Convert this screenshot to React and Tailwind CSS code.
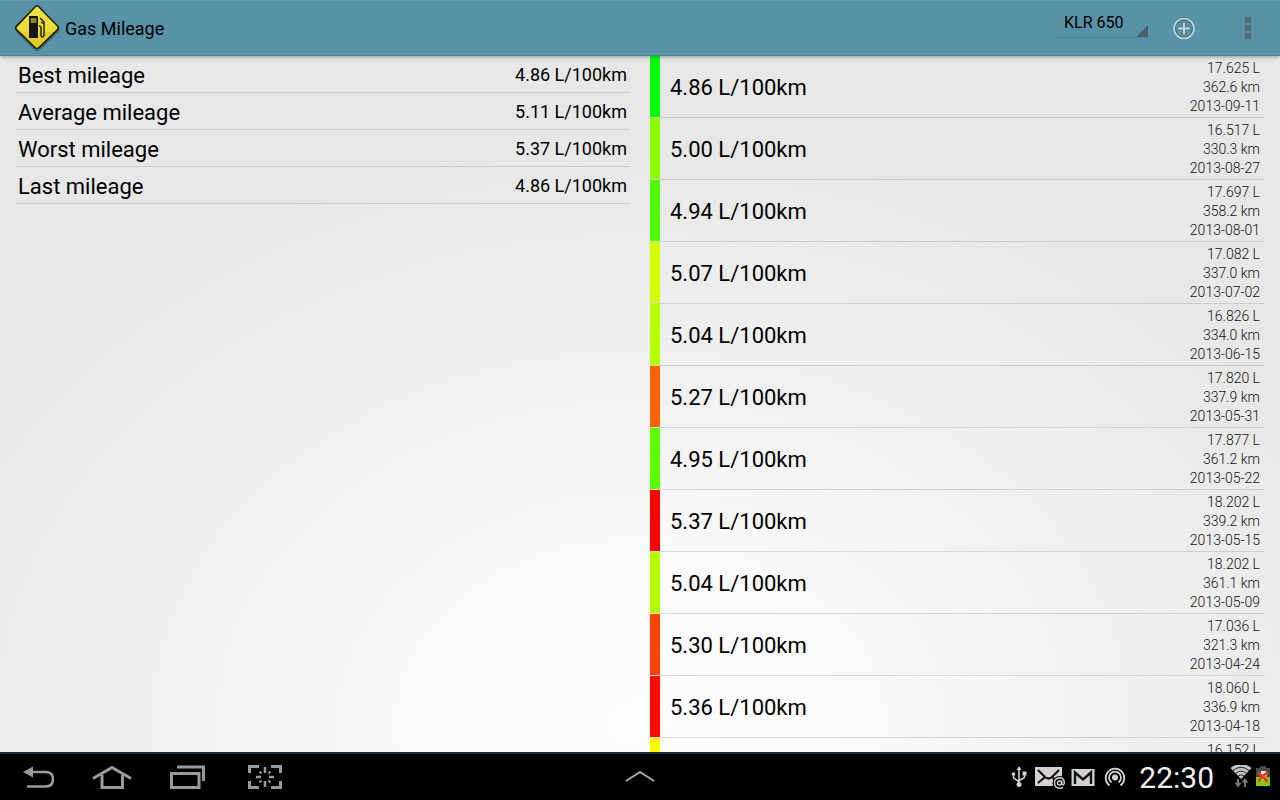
import React, { useState } from "react";

const stats = [
  { label: "Best mileage", value: "4.86 L/100km" },
  { label: "Average mileage", value: "5.11 L/100km" },
  { label: "Worst mileage", value: "5.37 L/100km" },
  { label: "Last mileage", value: "4.86 L/100km" },
];

const fillups = [
  { mileage: "4.86", litres: "17.625", km: "362.6", date: "2013-09-11", color: "bg-[#00ff00]" },
  { mileage: "5.00", litres: "16.517", km: "330.3", date: "2013-08-27", color: "bg-[#8cff00]" },
  { mileage: "4.94", litres: "17.697", km: "358.2", date: "2013-08-01", color: "bg-[#50ff00]" },
  { mileage: "5.07", litres: "17.082", km: "337.0", date: "2013-07-02", color: "bg-[#d2ff00]" },
  { mileage: "5.04", litres: "16.826", km: "334.0", date: "2013-06-15", color: "bg-[#b4ff00]" },
  { mileage: "5.27", litres: "17.820", km: "337.9", date: "2013-05-31", color: "bg-[#ff6200]" },
  { mileage: "4.95", litres: "17.877", km: "361.2", date: "2013-05-22", color: "bg-[#5aff00]" },
  { mileage: "5.37", litres: "18.202", km: "339.2", date: "2013-05-15", color: "bg-[#ff0000]" },
  { mileage: "5.04", litres: "18.202", km: "361.1", date: "2013-05-09", color: "bg-[#b4ff00]" },
  { mileage: "5.30", litres: "17.036", km: "321.3", date: "2013-04-24", color: "bg-[#ff4400]" },
  { mileage: "5.36", litres: "18.060", km: "336.9", date: "2013-04-18", color: "bg-[#ff0800]" },
  { litres: "16.152", color: "bg-[#fffa00]" },
];

function Logo() {
  return (
    <svg className="h-12 w-12" viewBox="0 0 48 48" aria-hidden="true">
      <defs>
        <linearGradient id="sign" x1="0" y1="0" x2="0" y2="1">
          <stop offset="0" stopColor="#f0e150" />
          <stop offset="0.6" stopColor="#ebdb34" />
          <stop offset="0.62" stopColor="#e3cf2a" />
          <stop offset="1" stopColor="#dfc922" />
        </linearGradient>
      </defs>
      <path d="M24 4 L46 26 Q47 27 46 28 L26 47 Q24 48 22 47 L3 28 Z" fill="#000" opacity="0.25" />
      <path d="M22 2 Q24 0 26 2 L45.500 22 Q47 24 45.500 26 L26 44.500 Q24 46 22 44.500 L2.500 26 Q1 24 2.500 22 Z" fill="#1d1b08" />
      <path d="M23 3 Q24 2 25 3 L44 22.500 Q45 24 44 25 L25 43.500 Q24 44 23 43.500 L4 25 Q3 24 4 23 Z" fill="url(#sign)" />
      <path d="M16.500 12 H24 Q25 12 25 13 V34 H16 V13 Q16 12 16.500 12 Z" fill="#151515" />
      <rect x="17.500" y="14" width="6" height="5" fill="#8a8030" />
      <path d="M27 14 L31 18 V30 Q31 33 29.500 33 Q28 33 28 31 V24 Q28 22 26 22 M28 18 L31 20" fill="none" stroke="#28250d" strokeWidth="1.500" />
    </svg>
  );
}

function Header() {
  const [bike, setBike] = useState("KLR 650");

  return (
    <header className="relative z-10 flex h-14 shrink-0 items-center border-b border-[#4f8195] border-t border-t-[#649db2] bg-[#5892a7] pl-[13px] pr-4 shadow-[0_1px_4px_rgba(0,0,0,0.35)]">
      <Logo />
      <h1 className="ml-1 flex-1 pt-[2px] text-lg">Gas Mileage</h1>

      <div className="relative mb-[10px] mr-5 w-[92px] border-b border-[#4c7f92]">
        <select
          aria-label="Vehicle"
          value={bike}
          onChange={(e) => setBike(e.target.value)}
          className="block h-7 w-full appearance-none bg-transparent pl-2 text-base outline-none"
        >
          <option>KLR 650</option>
        </select>
        <svg className="pointer-events-none absolute bottom-0 right-0 h-3 w-3" viewBox="0 0 12 12" aria-hidden="true">
          <path d="M12 0 V12 H0 Z" fill="#49626d" />
        </svg>
      </div>

      <button type="button" aria-label="Add fill-up" className="flex h-8 w-8 items-center justify-center">
        <svg className="h-6 w-6" viewBox="0 0 24 24" fill="none">
          <circle cx="12" cy="12.500" r="9.500" stroke="#4d7788" strokeWidth="3.400" />
          <circle cx="12" cy="12.500" r="10" stroke="#bfd5dd" strokeWidth="1.700" />
          <path d="M12 5.500 V19.500 M5 12.500 H19" stroke="#4d7788" strokeWidth="3.600" />
          <path d="M12 6.500 V18.500 M6 12.500 H18" stroke="#c3d8df" strokeWidth="1.900" />
        </svg>
      </button>

      <button type="button" aria-label="More options" className="ml-8 flex h-8 w-8 flex-col items-center justify-center gap-[2px]">
        <span className="h-[6px] w-[6px] bg-[#4e6b77]" />
        <span className="h-[6px] w-[6px] bg-[#4e6b77]" />
        <span className="h-[6px] w-[6px] bg-[#4e6b77]" />
      </button>
    </header>
  );
}

function StatsPane() {
  return (
    <section className="min-w-0 pl-[15px] pr-[10px]">
      <dl>
        {stats.map((s) => (
          <div key={s.label} className="flex h-[37px] items-center justify-between border-b border-black/12 px-[3px] pt-[2px]">
            <dt className="text-[22px]">{s.label}</dt>
            <dd className="text-lg">{s.value}</dd>
          </div>
        ))}
      </dl>
    </section>
  );
}

function FillupPane() {
  return (
    <section className="min-h-0 min-w-0 overflow-hidden pl-[10px] pr-[15px]">
      <ul>
        {fillups.map((f) => (
          <li key={f.litres + f.color} className="flex h-[62px] border-b border-black/12">
            <span className={`w-[10px] shrink-0 ${f.color}`} />
            <span className="flex flex-1 items-center pl-[10px] pt-[2px] text-[22px]">
              {f.mileage && `${f.mileage} L/100km`}
            </span>
            <span className="flex flex-col pr-[5px] pt-[3px] text-right text-sm font-light leading-[19px] text-[#111]">
              <span>{f.litres} L</span>
              {f.km && <span>{f.km} km</span>}
              {f.date && <span>{f.date}</span>}
            </span>
          </li>
        ))}
      </ul>
    </section>
  );
}

function NavButtons() {
  return (
    <div className="flex items-center gap-[38px] pl-[22px] text-[#9a9a9a]">
      <button type="button" aria-label="Back">
        <svg className="h-6 w-8" viewBox="0 0 32 24" fill="none">
          <path d="M8 7 H23.500 Q31 7 31 14 Q31 21.500 23.500 21.500 H5" stroke="currentColor" strokeWidth="2.600" />
          <path d="M1 7 L11 1.500 V12.500 Z" fill="currentColor" />
        </svg>
      </button>
      <button type="button" aria-label="Home">
        <svg className="h-6 w-10" viewBox="0 0 40 24" fill="none" stroke="currentColor" strokeWidth="3">
          <path d="M1 13.500 L20 2.500 L39 13.500" />
          <path d="M10 10 V22.500 H30.500 V10" />
        </svg>
      </button>
      <button type="button" aria-label="Recent apps">
        <svg className="h-6 w-9" viewBox="0 0 36 24" fill="none" stroke="currentColor" strokeWidth="3">
          <path d="M1.500 8.500 H29 V22.500 H1.500 Z" />
          <path d="M7 2 H33.500 V16" />
        </svg>
      </button>
      <button type="button" aria-label="Screenshot" className="pl-1">
        <svg className="h-6 w-[34px]" viewBox="0 0 34 24" fill="none" stroke="currentColor" strokeWidth="3">
          <path d="M1.500 8 V1.500 H11 M23 1.500 H32.500 V8 M32.500 16 V22.500 H23 M11 22.500 H1.500 V16" />
          <path d="M17 2 V8 M17 16 V22 M8 12 H13 M21 12 H26" strokeWidth="2.500" />
          <path d="M11.500 6.500 L13.500 8.500 M22.500 6.500 L20.500 8.500 M11.500 17.500 L13.500 15.500 M22.500 17.500 L20.500 15.500" strokeWidth="2" />
        </svg>
      </button>
    </div>
  );
}

function StatusIcons() {
  return (
    <div className="flex items-center justify-end pr-[10px] text-[#d4d0d2]">
      <svg className="h-6 w-4" viewBox="0 0 16 24" fill="none" stroke="currentColor" strokeWidth="1.600" aria-hidden="true">
        <path d="M8 4 V19 M2.500 10 V12 Q2.500 13.500 4 14 L8 16.500 M13.500 9 V11.500 Q13.500 13 12 13.500 L8 15.500" />
        <path d="M8 1 L10.500 5 H5.500 Z" fill="currentColor" stroke="none" />
        <circle cx="8" cy="19.500" r="2.500" fill="currentColor" stroke="none" />
        <circle cx="2.500" cy="9" r="1.800" fill="currentColor" stroke="none" />
        <path d="M11.500 6.500 H15.500 V10.500 H11.500 Z" fill="currentColor" stroke="none" />
      </svg>
      <svg className="ml-2 h-6 w-[31px]" viewBox="0 0 31 24" fill="none" aria-hidden="true">
        <rect x="0" y="2" width="27" height="19" fill="currentColor" />
        <path d="M3 5 L10 12 Q13.500 15 17 12 L24 5 M3 18 L9.500 12.500 M17.500 12.500 L21 15.500" stroke="#111" strokeWidth="2.200" />
        <circle cx="24.500" cy="18" r="7" fill="#000" />
        <circle cx="24.500" cy="18" r="2" stroke="currentColor" strokeWidth="1.400" />
        <path d="M26.800 15.500 V18.500 Q27 20.200 28.300 19.800 Q29.600 19 29.300 16.800 Q28.500 12.800 24.500 12.800 Q19.500 13.200 19.500 18 Q19.800 23.200 24.800 23.200 Q26.500 23.200 28 22.400" stroke="currentColor" strokeWidth="1.400" />
      </svg>
      <svg className="ml-[5px] h-6 w-6" viewBox="0 0 24 24" aria-hidden="true">
        <rect x="0.500" y="4" width="23" height="17" fill="currentColor" />
        <path d="M4 19 V7.500 L12 14.500 L20 7.500 V19" fill="none" stroke="#111" strokeWidth="2.400" />
      </svg>
      <svg className="ml-2 h-6 w-6" viewBox="0 0 24 24" fill="none" stroke="currentColor" strokeWidth="1.800" aria-hidden="true">
        <circle cx="12" cy="12.500" r="3" fill="currentColor" stroke="none" />
        <path d="M8.500 17.500 A6 6 0 1 1 15.500 17.500" />
        <path d="M6.500 20.500 A9.300 9.300 0 1 1 17.500 20.500" />
      </svg>
      <time className="ml-3 pt-[2px] text-[30px] leading-none text-[#f0f0f0]">22:30</time>
      <svg className="ml-4 h-6 w-[22px]" viewBox="0 0 22 24" fill="none" aria-hidden="true">
        <path d="M0.500 3 Q11 -5 21.500 3 L11 14 Z" fill="#c4c4c4" />
        <path d="M3 5.500 Q11 -1 19 5.500 M5.500 8.300 Q11 4 16.500 8.300 M8 11 Q11 8.500 14 11" stroke="#222" strokeWidth="1" />
        <path d="M8 14 V19 M15 22 V17" stroke="#777" strokeWidth="2" />
        <path d="M4.500 17.500 H11.500 L8 22.500 Z M11.500 17.500 H18.500 L15 13 Z" fill="#777" />
      </svg>
      <svg className="ml-1 h-6 w-[14px]" viewBox="0 0 14 24" fill="none" aria-hidden="true">
        <path d="M4 1 H10 V3 H14 V21 H0 V3 H4 Z" fill="#484848" />
        <rect x="0" y="12" width="14" height="9" fill="#84c80a" />
        <path d="M5 6 H10 L9 10 H11 L6 16 L7 11 H4.500 Z" fill="#f2f2f2" />
        <path d="M2 7.500 Q7 11 11.500 17 M12 7 Q6 11 2.500 16.500" stroke="#f03a1c" strokeWidth="2.600" />
      </svg>
    </div>
  );
}

function SystemBar() {
  return (
    <footer className="grid h-12 shrink-0 grid-cols-[1fr_auto_1fr] items-center border-t-2 border-[#0b2f3f] bg-black">
      <NavButtons />
      <button type="button" aria-label="Show tray">
        <svg className="h-3 w-[30px]" viewBox="0 0 30 12" fill="none">
          <path d="M1 10 L15 1 L29 10" stroke="#aaaaaa" strokeWidth="2" />
        </svg>
      </button>
      <StatusIcons />
    </footer>
  );
}

export default function App() {
  return (
    <div className="flex h-screen flex-col overflow-hidden bg-[#e7e7e7] font-['Roboto',sans-serif] text-black">
      <Header />
      <main className="grid min-h-0 flex-1 grid-cols-2 bg-[radial-gradient(ellipse_60%_84%_at_50%_96%,#fdfdfd_0%,#fbfbfb_22%,#f0f0f0_60%,#e7e7e7_100%)]">
        <StatsPane />
        <FillupPane />
      </main>
      <SystemBar />
    </div>
  );
}
